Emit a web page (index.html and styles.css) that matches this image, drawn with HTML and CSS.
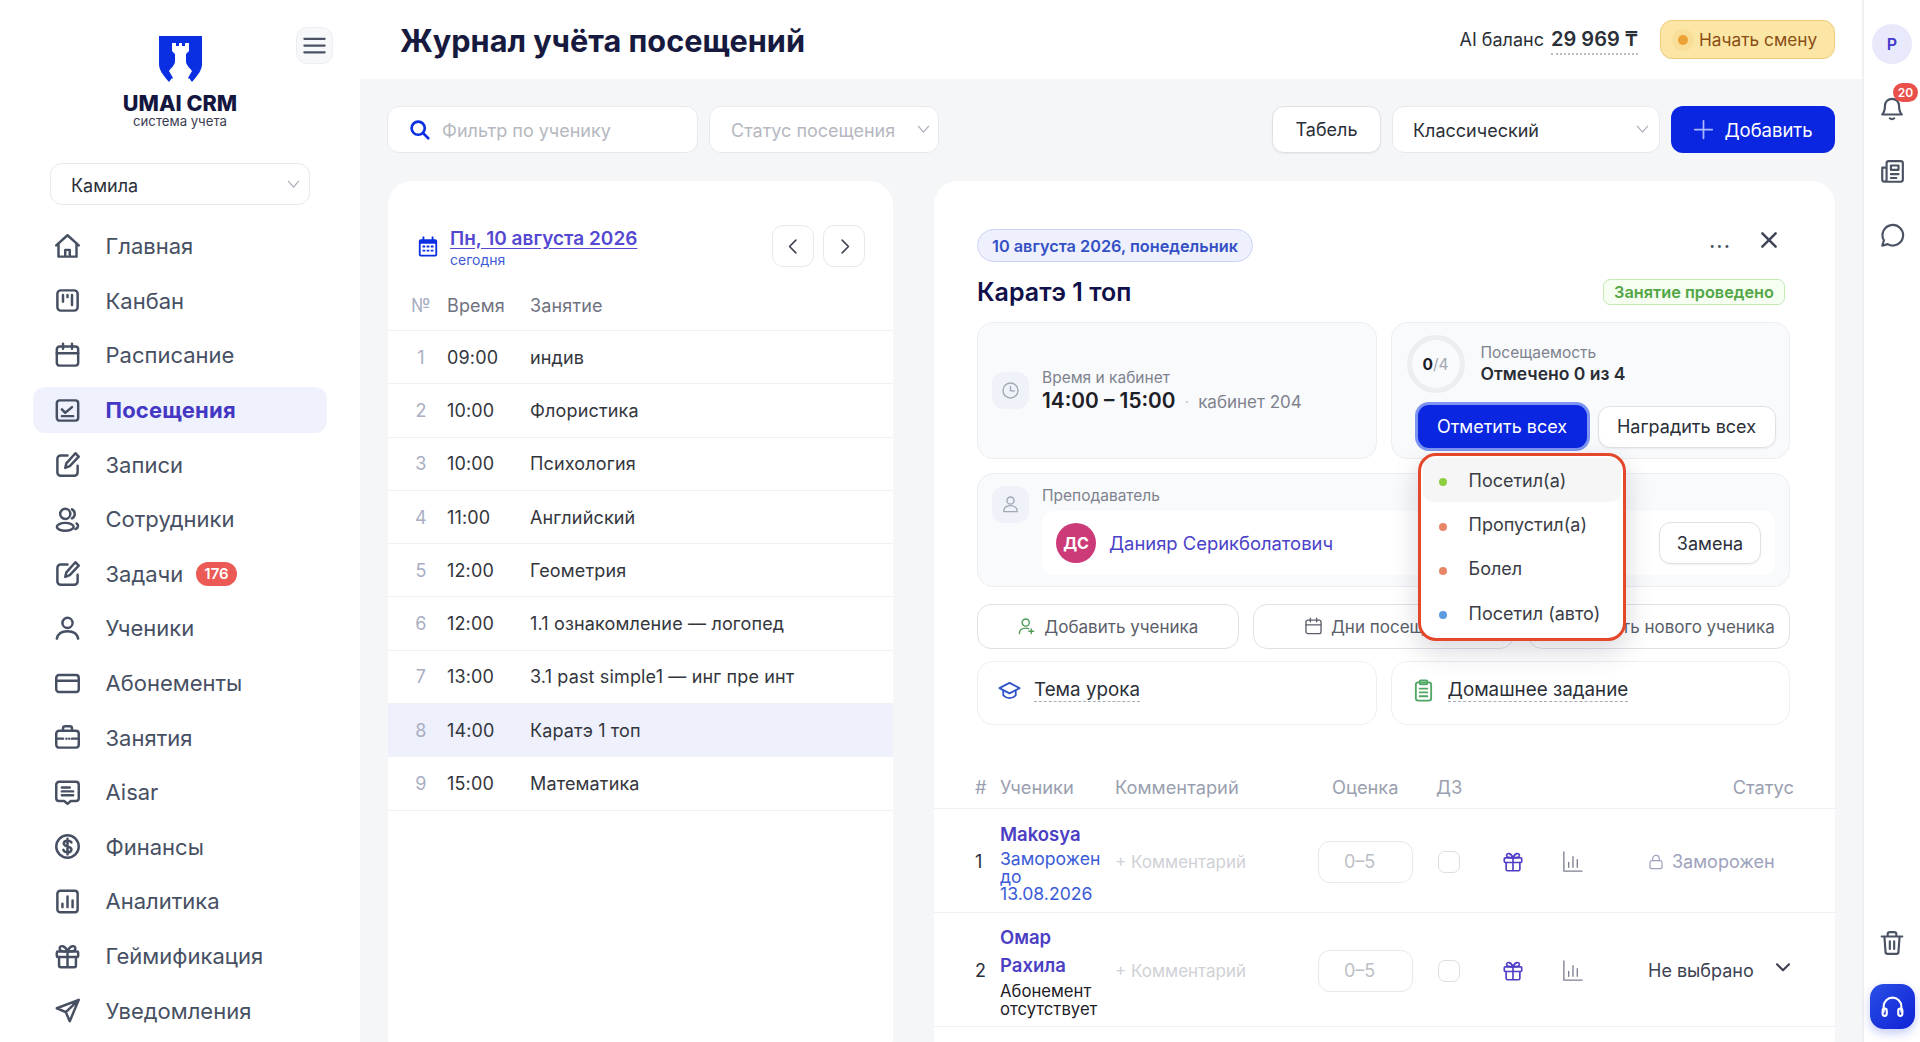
FILE: index.html
```html
<!DOCTYPE html>
<html lang="ru">

<head>
    <meta charset="UTF-8" />
    <meta name="viewport" content="width=device-width, initial-scale=1" />
    <title>Журнал учёта посещений</title>
    <link rel="stylesheet" href="styles.css">
</head>

<body>
    <div class="app">
        <!-- Sidebar -->
        <aside class="sidebar">
            <div class="brand">
                <svg class="brand-logo" viewBox="0 0 43 46">
                    <path fill="#0a2fe2" d="M0 0H43V28C43 34 39 39 33 46L30 42L27 46H16L13 42L10 46C4 39 0 34 0 28Z" />
                    <path fill="#fff" d="M13 7H17V10H20V7H23V10H26V7H30V15L27 18V25C27 29 30 31 33 35L29 42L31 46H12L14 42L10 35C13 31 16 29 16 25V18L13 15Z" />
                </svg>
                <div class="brand-name">UMAI CRM</div>
                <div class="brand-sub">система учета</div>
                <button class="burger">
                    <svg class="ic" viewBox="0 0 24 24"><path d="M3 6h18M3 12h18M3 18h18" /></svg>
                </button>
            </div>

            <div class="select branch">
                <span>Камила</span>
                <svg class="chev" viewBox="0 0 14 10"><path d="M1 1l6 7 6-7" /></svg>
            </div>

            <nav class="nav">
                <a class="nav-item"><svg class="ic" viewBox="0 0 24 24"><path d="M2 11L12 2l10 9M4 9v12h16V9M10 21v-6h4v6" /></svg>Главная</a>
                <a class="nav-item"><svg class="ic" viewBox="0 0 24 24"><rect x="3" y="3" width="18" height="18" rx="3" /><path d="M8 7v6M12 7v2M16 7v9" /></svg>Канбан</a>
                <a class="nav-item"><svg class="ic" viewBox="0 0 24 24"><rect x="2.5" y="4" width="19" height="17" rx="2.5" /><path d="M2.5 10h19M8 1.5V6M16 1.5V6" /></svg>Расписание</a>
                <a class="nav-item active"><svg class="ic" viewBox="0 0 24 24"><rect x="2.5" y="3" width="19" height="18" rx="2.5" /><path d="M7 11l3 3 6-5M7 17h10" /></svg>Посещения</a>
                <a class="nav-item"><svg class="ic" viewBox="0 0 24 24"><path d="M12 4H6a3 3 0 0 0-3 3v12a3 3 0 0 0 3 3h12a3 3 0 0 0 3-3v-6" /><path d="M10 15l1-4 8-9 3 3-8 8.500z" /></svg>Записи</a>
                <a class="nav-item"><svg class="ic" viewBox="0 0 24 24"><circle cx="10" cy="7" r="4.500" /><path d="M16 3a4.500 4.500 0 0 1 0 8" /><ellipse cx="10" cy="18.500" rx="7.500" ry="3.500" /><path d="M20 15.500c2 1 2 4-1 5" /></svg>Сотрудники</a>
                <a class="nav-item"><svg class="ic" viewBox="0 0 24 24"><path d="M12 4H6a3 3 0 0 0-3 3v12a3 3 0 0 0 3 3h12a3 3 0 0 0 3-3v-6" /><path d="M10 15l1-4 8-9 3 3-8 8.500z" /></svg>Задачи<span class="nav-badge">176</span></a>
                <a class="nav-item"><svg class="ic" viewBox="0 0 24 24"><circle cx="12" cy="7" r="4.500" /><path d="M2.500 21c1-4.500 5-6.500 9.500-6.500s8.500 2 9.500 6.500" /></svg>Ученики</a>
                <a class="nav-item"><svg class="ic" viewBox="0 0 24 24"><rect x="2" y="4.500" width="20" height="15" rx="2.500" /><path d="M2 9.500h20" /></svg>Абонементы</a>
                <a class="nav-item"><svg class="ic" viewBox="0 0 24 24"><rect x="2" y="6" width="20" height="15" rx="2.500" /><path d="M8 6V4a2 2 0 0 1 2-2h4a2 2 0 0 1 2 2v2M2 13h6M16 13h6M11 13h.010M13.500 13h.010" /></svg>Занятия</a>
                <a class="nav-item"><svg class="ic" viewBox="0 0 24 24"><path d="M4.500 2.500h15A2.500 2.500 0 0 1 22 5v12a2.500 2.500 0 0 1-2.500 2.500H15L12 22l-3-2.500H4.500A2.500 2.500 0 0 1 2 17V5a2.500 2.500 0 0 1 2.500-2.500z" /><path d="M7 7.500h7M7 11h10M7 14.500h10" /></svg>Aisar</a>
                <a class="nav-item"><svg class="ic" viewBox="0 0 24 24"><circle cx="12" cy="12" r="10" /><path d="M15.500 8.500C15 7.300 13.800 6.800 12 6.800c-2 0-3.300 1-3.300 2.500 0 3.500 6.800 1.800 6.800 5.300 0 1.600-1.500 2.600-3.500 2.600-1.900 0-3.200-.8-3.700-2.200M12 5v14" /></svg>Финансы</a>
                <a class="nav-item"><svg class="ic" viewBox="0 0 24 24"><rect x="3" y="2.500" width="18" height="19" rx="2.500" /><path d="M7.500 17v-3M12 17V7.500M16.500 17v-6" /></svg>Аналитика</a>
                <a class="nav-item"><svg class="ic" viewBox="0 0 24 24"><rect x="2.500" y="7.500" width="19" height="5" rx="1" /><path d="M4.500 12.500V20a1.500 1.500 0 0 0 1.500 1.500h12a1.500 1.500 0 0 0 1.500-1.500v-7.500M12 7.500v14M12 7.500C10 2 5 1.500 5 5c0 2 3 2.500 7 2.500zM12 7.500C14 2 19 1.500 19 5c0 2-3 2.500-7 2.500z" /></svg>Геймификация</a>
                <a class="nav-item"><svg class="ic" viewBox="0 0 24 24"><path d="M22 2.500L2.500 10l8 3.500 3.500 8zM10.500 13.500L22 2.500" /></svg>Уведомления</a>
            </nav>
        </aside>

        <div class="content">
            <!-- Top bar -->
            <header class="topbar">
                <h1>Журнал учёта посещений</h1>
                <div class="balance">AI баланс <b>29 969 ₸</b></div>
                <button class="shift"><i></i>Начать смену</button>
            </header>

            <main class="main">
                <!-- Filters -->
                <div class="toolbar">
                    <div class="search">
                        <svg class="ic" viewBox="0 0 24 24"><circle cx="10.500" cy="10.500" r="7.500" /><path d="M16 16l6 6" /></svg>
                        <span>Фильтр по ученику</span>
                    </div>
                    <div class="select status-filter">
                        <span>Статус посещения</span>
                        <svg class="chev" viewBox="0 0 14 10"><path d="M1 1l6 7 6-7" /></svg>
                    </div>
                    <button class="btn tabel">Табель</button>
                    <div class="select view-select">
                        <span>Классический</span>
                        <svg class="chev" viewBox="0 0 14 10"><path d="M1 1l6 7 6-7" /></svg>
                    </div>
                    <button class="add-btn">
                        <svg class="ic" viewBox="0 0 24 24"><path d="M12 2v20M2 12h20" /></svg>
                        Добавить
                    </button>
                </div>

                <div class="columns">
                    <!-- Day list -->
                    <section class="card day-card">
                        <div class="day-head">
                            <svg class="day-cal" viewBox="0 0 24 24"><path fill="#0a2fe2" d="M6 1h2v3h8V1h2v3h2a2 2 0 0 1 2 2v15a2 2 0 0 1-2 2H4a2 2 0 0 1-2-2V6a2 2 0 0 1 2-2h2z" /><path fill="#fff" d="M4 9h16v12H4z" /><path fill="#0a2fe2" d="M6 11h3v2H6zM10.500 11h3v2h-3zM15 11h3v2h-3zM6 15.500h3v2H6zM10.500 15.500h3v2h-3zM15 15.500h3v2h-3z" /></svg>
                            <div class="day-title">
                                <a>Пн, 10 августа 2026</a>
                                <span>сегодня</span>
                            </div>
                            <button class="arrow"><svg class="ic" viewBox="0 0 24 24"><path d="M15 4l-8 8 8 8" /></svg></button>
                            <button class="arrow"><svg class="ic" viewBox="0 0 24 24"><path d="M9 4l8 8-8 8" /></svg></button>
                        </div>
                        <div class="lesson lesson-head"><span>№</span><span>Время</span><span>Занятие</span></div>
                        <div class="lesson"><span>1</span><span>09:00</span><span>индив</span></div>
                        <div class="lesson"><span>2</span><span>10:00</span><span>Флористика</span></div>
                        <div class="lesson"><span>3</span><span>10:00</span><span>Психология</span></div>
                        <div class="lesson"><span>4</span><span>11:00</span><span>Английский</span></div>
                        <div class="lesson"><span>5</span><span>12:00</span><span>Геометрия</span></div>
                        <div class="lesson"><span>6</span><span>12:00</span><span>1.1 ознакомление — логопед</span></div>
                        <div class="lesson"><span>7</span><span>13:00</span><span>3.1 past simple1 — инг пре инт</span></div>
                        <div class="lesson selected"><span>8</span><span>14:00</span><span>Каратэ 1 топ</span></div>
                        <div class="lesson"><span>9</span><span>15:00</span><span>Математика</span></div>
                    </section>

                    <!-- Lesson details -->
                    <section class="card detail">
                        <div class="detail-body">
                            <div class="detail-top">
                                <span class="date-pill">10 августа 2026, понедельник</span>
                                <span class="dots">...</span>
                                <svg class="ic close" viewBox="0 0 24 24"><path d="M4 4l16 16M20 4L4 20" /></svg>
                            </div>
                            <div class="title-row">
                                <h2>Каратэ 1 топ</h2>
                                <span class="done-pill">Занятие проведено</span>
                            </div>

                            <div class="pair pair-info">
                                <div class="info time-info">
                                    <div class="info-icon"><svg class="ic" viewBox="0 0 24 24"><circle cx="12" cy="12" r="9.500" /><path d="M12 7v5.500h5" /></svg></div>
                                    <div>
                                        <div class="label">Время и кабинет</div>
                                        <div class="time"><b>14:00 – 15:00</b><i>·</i><span>кабинет 204</span></div>
                                    </div>
                                </div>
                                <div class="info attend">
                                    <div class="attend-top">
                                        <div class="ring"><b>0</b>/4</div>
                                        <div>
                                            <div class="label">Посещаемость</div>
                                            <div class="attend-count">Отмечено 0 из 4</div>
                                        </div>
                                    </div>
                                    <div class="attend-btns">
                                        <button class="mark-all">Отметить всех</button>
                                        <button class="btn reward">Наградить всех</button>
                                    </div>
                                    <!-- Open status menu -->
                                    <ul class="menu">
                                        <li class="hover"><i class="dot-green"></i>Посетил(а)</li>
                                        <li><i class="dot-red"></i>Пропустил(а)</li>
                                        <li><i class="dot-red"></i>Болел</li>
                                        <li><i class="dot-blue"></i>Посетил (авто)</li>
                                    </ul>
                                </div>
                            </div>

                            <div class="info teacher">
                                <div class="info-icon"><svg class="ic" viewBox="0 0 24 24"><circle cx="12" cy="7" r="4.500" /><path d="M3.500 21c0-5 3.500-7.500 8.500-7.500s8.500 2.500 8.500 7.500z" /></svg></div>
                                <div class="teacher-main">
                                    <div class="label">Преподаватель</div>
                                    <div class="teacher-box">
                                        <span class="avatar">ДС</span>
                                        <a>Данияр Серикболатович</a>
                                        <button class="btn swap">Замена</button>
                                    </div>
                                </div>
                            </div>

                            <div class="actions">
                                <button class="action"><svg class="ic" viewBox="0 0 24 24"><circle cx="11" cy="7" r="4.500" /><path d="M3 21c0-5 3.500-7 8-7 1.500 0 3 .2 4 .8M18 15v6M15 18h6" /></svg>Добавить ученика</button>
                                <button class="action"><svg class="ic" viewBox="0 0 24 24"><rect x="2.500" y="4" width="19" height="17" rx="2.500" /><path d="M2.500 10h19M8 1.500V6M16 1.500V6" /></svg>Дни посещения</button>
                                <button class="action action-new">Добавить нового ученика</button>
                            </div>

                            <div class="pair pair-topic">
                                <div class="topic">
                                    <svg class="topic-ic cap" viewBox="0 0 24 24"><path d="M12 4L1.500 9.500 12 15l10.500-5.500z" /><path d="M5.500 12v5c2 2 4 3 6.500 3s4.500-1 6.500-3v-5" /></svg>
                                    <span>Тема урока</span>
                                </div>
                                <div class="topic">
                                    <svg class="topic-ic clip" viewBox="0 0 24 24"><rect x="4" y="3.500" width="16" height="19" rx="2.500" /><rect x="8" y="1.500" width="8" height="4" rx="1" /><path d="M8 10h8M8 14h8M8 18h8" /></svg>
                                    <span>Домашнее задание</span>
                                </div>
                            </div>
                        </div>

                        <!-- Students table -->
                        <div class="row row-head">
                            <span>#</span><span>Ученики</span><span>Комментарий</span><span class="grade-title">Оценка</span><span>ДЗ</span><span></span><span></span><span class="status-title">Статус</span>
                        </div>
                        <div class="row row-frozen">
                            <span>1</span>
                            <div class="student">
                                <a class="name">Makosya</a>
                                <div class="frozen-note">Заморожен до 13.08.2026</div>
                            </div>
                            <span class="comment">+ Комментарий</span>
                            <span class="grade">0–5</span>
                            <span class="check"></span>
                            <svg class="ic gift" viewBox="0 0 24 24"><rect x="2.500" y="7.500" width="19" height="5" rx="1" /><path d="M4.500 12.500V20a1.500 1.500 0 0 0 1.500 1.500h12a1.500 1.500 0 0 0 1.500-1.500v-7.500M12 7.500v14M12 7.500C10 2 5 1.500 5 5c0 2 3 2.500 7 2.500zM12 7.500C14 2 19 1.500 19 5c0 2-3 2.500-7 2.500z" /></svg>
                            <svg class="ic stats" viewBox="0 0 24 24"><path d="M3 2v20h19M8 18v-5M12.500 18V7M17 18v-8" /></svg>
                            <span class="frozen-status"><svg class="ic" viewBox="0 0 24 24"><rect x="3" y="10" width="18" height="12" rx="3" /><path d="M7 10V7a5 5 0 0 1 10 0v3" /></svg>Заморожен</span>
                        </div>
                        <div class="row row-open">
                            <span>2</span>
                            <div class="student">
                                <a class="name">Омар Рахила</a>
                                <div class="no-sub">Абонемент отсутствует</div>
                            </div>
                            <span class="comment">+ Комментарий</span>
                            <span class="grade">0–5</span>
                            <span class="check"></span>
                            <svg class="ic gift" viewBox="0 0 24 24"><rect x="2.500" y="7.500" width="19" height="5" rx="1" /><path d="M4.500 12.500V20a1.500 1.500 0 0 0 1.500 1.500h12a1.500 1.500 0 0 0 1.500-1.500v-7.500M12 7.500v14M12 7.500C10 2 5 1.500 5 5c0 2 3 2.500 7 2.500zM12 7.500C14 2 19 1.500 19 5c0 2-3 2.500-7 2.500z" /></svg>
                            <svg class="ic stats" viewBox="0 0 24 24"><path d="M3 2v20h19M8 18v-5M12.500 18V7M17 18v-8" /></svg>
                            <span class="open-status">Не выбрано<svg class="ic" viewBox="0 0 24 24"><path d="M4 7l8 8 8-8" /></svg></span>
                        </div>
                    </section>
                </div>
            </main>
        </div>

        <!-- Right rail -->
        <aside class="rail">
            <span class="rail-avatar">Р</span>
            <span class="rail-icon bell">
                <svg class="ic" viewBox="0 0 24 24"><path d="M3 18c2-2 2.500-3.500 2.500-8a6.500 6.500 0 0 1 13 0c0 4.500.5 6 2.500 8zM10 21.500c1 1 3 1 4 0" /></svg>
                <span class="bell-badge">20</span>
            </span>
            <span class="rail-icon"><svg class="ic" viewBox="0 0 24 24"><path d="M7 21h13a2 2 0 0 0 2-2V4a2 2 0 0 0-2-2H9a2 2 0 0 0-2 2v15a2 2 0 0 1-4 0V8h4" /><path d="M11 6h7v4h-7zM11 14h7M11 17.500h5" /></svg></span>
            <span class="rail-icon"><svg class="ic" viewBox="0 0 24 24"><path d="M3 21l1.500-5A9.500 9.500 0 1 1 8 19.500z" /></svg></span>
            <span class="rail-icon trash"><svg class="ic" viewBox="0 0 24 24"><path d="M2.500 6h19M8 6V4a2 2 0 0 1 2-2h4a2 2 0 0 1 2 2v2M5 6l1 14a2 2 0 0 0 2 2h8a2 2 0 0 0 2-2l1-14M10 10.500v7M14 10.500v7" /></svg></span>
            <button class="support"><svg class="ic" viewBox="0 0 24 24"><path d="M3.500 17v-5a8.500 8.500 0 0 1 17 0v5" /><rect x="2.500" y="14" width="4" height="7" rx="2" /><rect x="17.500" y="14" width="4" height="7" rx="2" /></svg></button>
        </aside>
    </div>
</body>

</html>
```

FILE: styles.css
```css
/* Reset & Global Styles */
* {
    margin: 0;
    padding: 0;
    box-sizing: border-box;
}

body {
    height: 1042px;
    overflow: hidden;
    background: #fff;
    font-family: Inter, "Noto Sans", sans-serif;
    color: #2b2f38;
}

button {
    font-family: inherit;
    cursor: pointer;
}

.ic {
    fill: none;
    stroke: currentColor;
    stroke-width: 2;
    stroke-linecap: round;
    stroke-linejoin: round;
    flex-shrink: 0;
}

.app {
    display: flex;
    height: 1042px;
}

/* Sidebar */
.sidebar {
    width: 360px;
    flex-shrink: 0;
    background: #fff;
    padding: 36px 33px 0;
}

.brand {
    position: relative;
    display: flex;
    flex-direction: column;
    align-items: center;
    height: 127px;
}

.brand-logo {
    width: 43px;
    height: 46px;
}

.brand-name {
    margin-top: 10px;
    font-size: 21.6px;
    line-height: 22px;
    font-weight: 800;
    color: #14163f;
}

.brand-sub {
    font-size: 13.2px;
    line-height: 14px;
    color: #3a3d52;
}

.burger {
    position: absolute;
    left: 263px;
    top: -9px;
    width: 37px;
    height: 37px;
    display: flex;
    align-items: center;
    justify-content: center;
    background: #f7f8fa;
    border: 1px solid #eceef2;
    border-radius: 11px;
    color: #4a5263;
}

.burger svg {
    width: 27px;
    height: 27px;
}

/* Selects */
.select {
    display: flex;
    align-items: center;
    justify-content: space-between;
    background: #fff;
    border: 1px solid #e7e9ee;
    border-radius: 12px;
    font-size: 18px;
}

.select span {
    padding-top: 2px;
}

.chev {
    width: 13px;
    height: 9px;
    fill: none;
    stroke: #a9adb6;
    stroke-width: 1.3;
}

.branch {
    width: 260px;
    height: 42px;
    margin-left: 17px;
    padding: 0 9px 0 20px;
    color: #2b2f38;
}

/* Navigation */
.nav {
    margin-top: 14px;
}

.nav-item {
    display: flex;
    align-items: center;
    height: 54.6px;
    padding-left: 21px;
    font-size: 22px;
    color: #475063;
}

.nav-item svg {
    width: 27px;
    height: 27px;
    margin-right: 24.5px;
    stroke-width: 2.2;
}

.nav-item.active {
    position: relative;
    z-index: 0;
    font-weight: 700;
    letter-spacing: 0.2px;
    color: #4337c4;
}

.nav-item.active svg {
    color: #475063;
}

.nav-item.active::before {
    content: "";
    position: absolute;
    z-index: -1;
    left: 0;
    right: 0;
    top: 4px;
    bottom: 4px;
    background: #eff1fc;
    border-radius: 12px;
}

.nav-badge {
    margin-left: 13px;
    padding: 0 8px;
    height: 24px;
    line-height: 24px;
    border-radius: 12px;
    background: #ec5a55;
    color: #fff;
    font-size: 15px;
    font-weight: 600;
}

/* Top bar */
.content {
    flex: 1;
    min-width: 0;
    display: flex;
    flex-direction: column;
}

.topbar {
    height: 79px;
    flex-shrink: 0;
    display: flex;
    align-items: center;
    padding: 0 27px 0 40px;
}

h1 {
    flex: 1;
    margin-top: 2px;
    font-size: 30.7px;
    font-weight: 700;
    color: #171a3f;
}

.balance {
    margin-top: 3px;
    margin-right: 22px;
    font-size: 18px;
    color: #2b2f38;
}

.balance b {
    display: inline-block;
    font-size: 20px;
    font-weight: 600;
    margin-left: 2px;
    padding-bottom: 2px;
    border-bottom: 2px dotted #b9bcc4;
}

.shift {
    width: 175px;
    height: 39px;
    display: flex;
    align-items: center;
    padding-left: 17px;
    background: #fbe6a6;
    border: 1px solid #efc97e;
    border-radius: 12px;
    font-size: 17.3px;
    color: #8a4d14;
}

.shift i {
    width: 10px;
    height: 10px;
    margin-right: 11px;
    border-radius: 50%;
    background: #eea235;
    box-shadow: 0 0 0 6px rgba(238, 162, 53, 0.12);
}

/* Main area */
.main {
    flex: 1;
    min-height: 0;
    background: #f5f6f8;
    padding: 27px 27px 0;
}

.toolbar {
    display: flex;
    gap: 11px;
    height: 47px;
}

.search {
    width: 311px;
    display: flex;
    align-items: center;
    padding-left: 21px;
    background: #fff;
    border: 1px solid #e7e9ee;
    border-radius: 12px;
    font-size: 18px;
    color: #b5b8c0;
}

.search span {
    padding-top: 2px;
}

.search svg {
    width: 21px;
    height: 21px;
    margin-right: 12px;
    color: #0a2fe2;
    stroke-width: 3;
}

.status-filter {
    width: 230px;
    padding: 0 8px 0 21px;
    color: #b5b8c0;
}

.btn {
    background: #fff;
    border: 1px solid #dfe1e7;
    border-radius: 12px;
    font-size: 18px;
    color: #2b2f38;
    box-shadow: 0 1px 2px rgba(20, 20, 50, 0.06);
}

.tabel {
    width: 109px;
    margin-left: auto;
}

.view-select {
    width: 268px;
    padding: 0 10px 0 20px;
}

.add-btn {
    width: 164px;
    display: flex;
    align-items: center;
    justify-content: center;
    gap: 10px;
    background: #0a26e0;
    border: none;
    border-radius: 12px;
    font-size: 18.5px;
    color: #fff;
}

.add-btn svg {
    width: 21px;
    height: 21px;
    color: #aab6ff;
}

/* Cards */
.columns {
    display: flex;
    gap: 41px;
    margin-top: 28px;
    margin-left: 1px;
}

.card {
    background: #fff;
    border-radius: 24px;
    height: 880px;
    overflow: hidden;
}

.day-card {
    width: 505px;
    flex-shrink: 0;
}

.day-head {
    display: flex;
    align-items: center;
    height: 86px;
    padding: 44px 28px 0 29px;
    gap: 9px;
}

.day-cal {
    width: 22px;
    height: 23px;
}

.day-title {
    flex: 1;
    margin-top: 3px;
    margin-left: 2px;
}

.day-title a {
    display: block;
    width: fit-content;
    font-size: 19px;
    line-height: 24px;
    font-weight: 600;
    color: #5548d2;
    text-decoration: underline;
    text-underline-offset: 3px;
}

.day-title span {
    display: block;
    font-size: 14px;
    line-height: 18px;
    color: #3d5ad6;
}

.arrow {
    width: 42px;
    height: 42px;
    display: flex;
    align-items: center;
    justify-content: center;
    background: #fff;
    border: 1px solid #e7e9ee;
    border-radius: 11px;
    color: #3c4250;
}

.arrow svg {
    width: 19px;
    height: 19px;
}

.lesson {
    display: grid;
    grid-template-columns: 59px 83px 1fr;
    align-items: center;
    height: 53.3px;
    border-bottom: 1px solid #eff0f3;
    font-size: 18px;
    letter-spacing: 0.15px;
    color: #33363d;
}

.lesson span:first-child {
    text-align: center;
    padding-left: 7px;
    color: #a9aec2;
}

.lesson-head {
    height: 46px;
    margin-top: 18px;
    padding-bottom: 4px;
    color: #6f7380;
}

.lesson.selected {
    background: #eef0fc;
}

/* Lesson details */
.detail {
    flex: 1;
    min-width: 0;
    position: relative;
}

.detail-body {
    padding: 48px 45px 0 43px;
}

.detail-top {
    display: flex;
    align-items: center;
    padding-right: 11px;
}

.date-pill {
    height: 33px;
    line-height: 32px;
    padding: 0 14px;
    background: #eef1fd;
    border: 1px solid #c9d2f7;
    border-radius: 17px;
    font-size: 16.3px;
    font-weight: 600;
    color: #3450c4;
}

.dots {
    margin-left: auto;
    margin-right: 28px;
    margin-top: -12px;
    font-size: 22px;
    line-height: 20px;
    color: #4a5263;
    letter-spacing: 1px;
}

.close {
    width: 20px;
    height: 20px;
    margin-top: -12px;
    color: #3f4657;
    stroke-width: 3;
}

.title-row {
    display: flex;
    align-items: center;
    justify-content: space-between;
    padding-right: 5px;
    margin-top: 16px;
    height: 27px;
}

h2 {
    font-size: 25px;
    font-weight: 600;
    color: #10114a;
}

.done-pill {
    height: 26px;
    line-height: 24px;
    padding: 0 10px;
    background: #f6fdf1;
    border: 1px solid #c7e9b6;
    border-radius: 7px;
    font-size: 16.3px;
    font-weight: 600;
    color: #52a645;
}

.pair {
    display: grid;
    grid-template-columns: 1fr 1fr;
    gap: 14px;
}

.pair-info {
    margin-top: 17px;
    height: 137px;
}

.pair-topic {
    margin-top: 12px;
}

.info {
    background: #f9fafc;
    border: 1px solid #eceef2;
    border-radius: 16px;
}

.time-info {
    display: flex;
    align-items: center;
    gap: 13px;
    padding-left: 14px;
}

.info-icon {
    width: 37px;
    height: 37px;
    flex-shrink: 0;
    display: flex;
    align-items: center;
    justify-content: center;
    background: #f0f2fa;
    border-radius: 12px;
    color: #a2a7b3;
}

.info-icon svg {
    width: 19px;
    height: 19px;
    stroke-width: 1.7;
}

.label {
    font-size: 15.5px;
    line-height: 19px;
    color: #7e828e;
}

.time {
    display: flex;
    align-items: baseline;
    margin-top: 2px;
    line-height: 24px;
    color: #7e828e;
}

.time b {
    font-size: 20.8px;
    font-weight: 600;
    color: #1d2027;
}

.time i {
    margin: 0 9px;
    font-style: normal;
    color: #c3c6ce;
}

.time span {
    font-size: 17px;
}

.attend {
    position: relative;
    padding: 12px 13px 0 15px;
}

.attend-top {
    display: flex;
    align-items: center;
    gap: 16px;
}

.ring {
    width: 58px;
    height: 58px;
    border: 5px solid #eceef2;
    border-radius: 50%;
    display: flex;
    align-items: center;
    justify-content: center;
    font-size: 15.5px;
    color: #a2a7b3;
}

.ring b {
    color: #1d2027;
    font-weight: 700;
}

.attend-count {
    font-size: 17.5px;
    line-height: 24px;
    font-weight: 600;
    color: #2a2d35;
}

.attend-btns {
    display: flex;
    align-items: center;
    gap: 11px;
    margin-top: 12px;
    margin-left: 11px;
}

.mark-all {
    width: 169px;
    height: 43px;
    background: #0a26e0;
    border: none;
    box-shadow: 0 0 0 3px #7d95f1;
    border-radius: 11px;
    font-size: 18px;
    color: #fff;
}

.reward {
    width: 178px;
    height: 42px;
}

/* Open status menu */
.menu {
    position: absolute;
    z-index: 5;
    left: 26px;
    top: 130px;
    width: 208px;
    height: 188px;
    padding: 2px 2px 0;
    list-style: none;
    background: #fff;
    border: 3px solid #e5472a;
    border-radius: 18px;
    box-shadow: 0 10px 28px rgba(20, 20, 50, 0.16);
}

.menu li {
    display: flex;
    align-items: center;
    height: 44.4px;
    padding-left: 16px;
    border-radius: 10px;
    font-size: 18px;
    color: #3a3d45;
}

.menu li.hover {
    background: #f6f6f7;
}

.menu i {
    width: 8px;
    height: 8px;
    margin-top: 4px;
    margin-right: 22px;
    border-radius: 50%;
}

.dot-green {
    background: #8fce3f;
}

.dot-red {
    background: #e88566;
}

.dot-blue {
    background: #5b9be0;
}

.teacher {
    display: flex;
    gap: 13px;
    height: 114px;
    margin-top: 14px;
    padding: 12px 14px 0 14px;
}

.teacher-main {
    flex: 1;
}

.teacher-box {
    display: flex;
    align-items: center;
    height: 64px;
    margin-top: 6px;
    padding: 0 14px;
    background: #fff;
    border-radius: 12px;
}

.avatar {
    width: 40px;
    height: 40px;
    display: flex;
    align-items: center;
    justify-content: center;
    margin-right: 13px;
    background: #cd3a78;
    border-radius: 50%;
    color: #fff;
    font-size: 16px;
    font-weight: 700;
}

.teacher-box a {
    flex: 1;
    font-size: 18.4px;
    color: #4a42c8;
}

.swap {
    width: 102px;
    height: 42px;
}

.actions {
    display: grid;
    grid-template-columns: repeat(3, 1fr);
    gap: 14px;
    margin-top: 17px;
}

.action {
    height: 45px;
    display: flex;
    align-items: center;
    justify-content: center;
    gap: 8px;
    background: #fff;
    border: 1px solid #dfe1e7;
    border-radius: 14px;
    font-size: 17px;
    color: #5a5e69;
}

.action svg {
    width: 19px;
    height: 19px;
    stroke-width: 1.7;
}

.action:first-child svg {
    color: #4f9a57;
}

.action-new {
    padding-left: 15px;
}

.topic {
    height: 64px;
    display: flex;
    align-items: center;
    gap: 13px;
    padding: 0 0 6px 20px;
    background: #fff;
    border: 1px solid #eeeff3;
    border-radius: 16px;
    font-size: 18.8px;
}

.topic span {
    border-bottom: 1px dashed #a9adb6;
    color: #2b2f38;
}

.topic-ic {
    width: 23px;
    height: 23px;
    fill: none;
    stroke-width: 1.9;
    stroke-linejoin: round;
    stroke-linecap: round;
}

.cap {
    stroke: #2f55c9;
}

.clip {
    stroke: #4fa763;
}

/* Students table */
.row {
    display: grid;
    grid-template-columns: 25px 115px 203px 118px 66px 58px 88px 1fr;
    align-items: center;
    padding-left: 41px;
    border-bottom: 1px solid #eff0f3;
    font-size: 18px;
}

.row-head {
    height: 49px;
    margin-top: 35px;
    padding-top: 6px;
    font-size: 18.3px;
    color: #9a9fb0;
}

.grade-title {
    padding-left: 14px;
}

.status-title {
    text-align: right;
    padding-right: 41px;
}

.row-frozen {
    height: 104px;
    padding-top: 2px;
}

.row-open {
    height: 114px;
    padding-top: 2px;
}

.name {
    display: block;
    font-size: 18.5px;
    line-height: 28px;
    font-weight: 600;
    color: #4c3fc4;
}

.frozen-note {
    margin-top: 2px;
    font-size: 17.6px;
    line-height: 17.5px;
    color: #3b5bd6;
}

.no-sub {
    margin-top: 3px;
    font-size: 16.7px;
    line-height: 18px;
    color: #1d2027;
}

.comment {
    font-size: 17px;
    color: #cfd1d6;
}

.grade {
    width: 95px;
    height: 42px;
    line-height: 40px;
    padding-left: 25px;
    border: 1px solid #e7e9ee;
    border-radius: 12px;
    color: #bcbfc6;
}

.check {
    width: 22px;
    height: 22px;
    margin-left: 2px;
    border: 1px solid #dcdee3;
    border-radius: 7px;
}

.gift {
    width: 22px;
    height: 22px;
    color: #4f3fc6;
    stroke-width: 1.8;
}

.stats {
    width: 23px;
    height: 23px;
    margin-left: 1px;
    color: #7c8090;
    stroke-width: 1.4;
}

.frozen-status {
    display: flex;
    align-items: center;
    gap: 8px;
    color: #9ea2bd;
}

.frozen-status svg {
    width: 16px;
    height: 16px;
    stroke-width: 1.8;
}

.open-status {
    display: flex;
    align-items: center;
    gap: 20px;
    color: #3d4152;
}

.open-status svg {
    width: 18px;
    height: 18px;
    margin-top: -6px;
    stroke-width: 2.8;
}

/* Right rail */
.rail {
    width: 58px;
    flex-shrink: 0;
    display: flex;
    flex-direction: column;
    align-items: center;
    padding-top: 24px;
    background: #fff;
    border-left: 2px solid #eff0f3;
    color: #4a5263;
}

.rail-avatar {
    width: 40px;
    height: 40px;
    display: flex;
    align-items: center;
    justify-content: center;
    background: #e8e9fb;
    border-radius: 50%;
    color: #4338ca;
    font-size: 16px;
    font-weight: 600;
}

.rail-icon {
    position: relative;
    height: 64px;
    display: flex;
    align-items: center;
}

.rail-icon svg {
    width: 26px;
    height: 26px;
}

.bell {
    margin-top: 12px;
}

.bell-badge {
    position: absolute;
    left: 14px;
    top: 7px;
    width: 25px;
    height: 19px;
    line-height: 19px;
    text-align: center;
    background: #e9504c;
    border-radius: 10px;
    color: #fff;
    font-size: 12px;
    font-weight: 600;
}

.trash {
    margin-top: auto;
    height: 28px;
    margin-bottom: 27px;
}

.support {
    width: 45px;
    height: 45px;
    margin-bottom: 13px;
    display: flex;
    align-items: center;
    justify-content: center;
    background: linear-gradient(135deg, #2a4fe6, #0f22d6);
    border: none;
    border-radius: 14px;
    color: #fff;
    box-shadow: 0 4px 10px rgba(20, 50, 220, 0.25);
}

.support svg {
    width: 25px;
    height: 25px;
}
```
